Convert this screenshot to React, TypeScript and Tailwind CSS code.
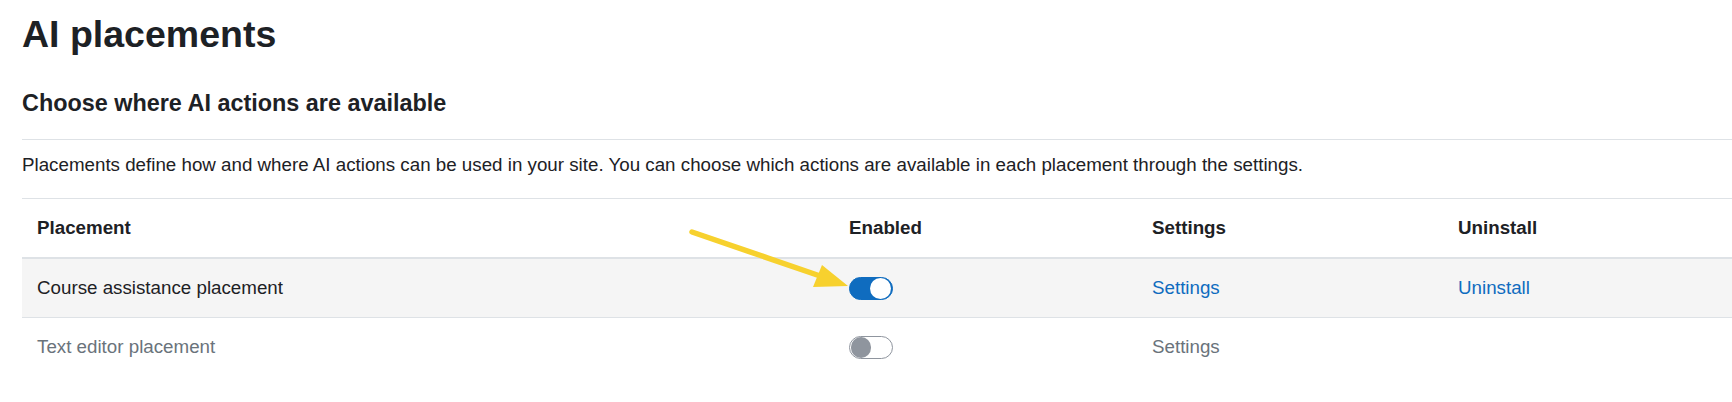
const FONT = { fontFamily: '"Liberation Sans", Arial, sans-serif' }

type Placement = {
  name: string
  enabled: boolean
}

const PLACEMENTS: Placement[] = [
  { name: 'Course assistance placement', enabled: true },
  { name: 'Text editor placement', enabled: false }
]

const COLS = 'grid grid-cols-[812px_303px_306px_1fr]'

function Toggle({ on }: { on: boolean }) {
  return (
    <span
      className={
        on
          ? 'flex h-[23px] w-[44px] items-center justify-end rounded-full border border-[#0f6cbf] bg-[#0f6cbf] px-[1.5px]'
          : 'flex h-[23px] w-[44px] items-center justify-start rounded-full border border-[#8f959e] bg-white px-[0.5px]'
      }
    >
      <span
        className={
          on ? 'h-[20.5px] w-[20.5px] rounded-full bg-white' : 'h-[20.5px] w-[20.5px] rounded-full bg-[#8f959e]'
        }
      />
    </span>
  )
}

function Row({ placement, index }: { placement: Placement; index: number }) {
  const muted = !placement.enabled
  return (
    <div
      className={`${COLS} text-[18.75px] leading-[28.125px] ${
        index === 0 ? 'bg-[#f5f5f5]' : 'border-t border-[#dee2e6]'
      }`}
    >
      <div className={`px-[15px] py-[15px] ${muted ? 'text-[#6a737b]' : ''}`}>{placement.name}</div>
      <div className="flex h-[58.125px] items-center px-[15px]">
        <Toggle on={placement.enabled} />
      </div>
      <div className="px-[15px] py-[15px]">
        <span className={muted ? 'text-[#6a737b]' : 'text-[#0f6cbf]'}>Settings</span>
      </div>
      <div className="px-[15px] py-[15px]">
        {placement.enabled && <span className="text-[#0f6cbf]">Uninstall</span>}
      </div>
    </div>
  )
}

export default function App() {
  return (
    <div className="relative h-[402px] w-full overflow-hidden bg-white pl-[22px] pt-[12px] text-[#1d2125]" style={FONT}>
      <h2 className="text-[37.5px] font-bold leading-[45px]">AI placements</h2>
      <h4 className="mt-[32px] text-[23.4px] font-bold leading-[28px]">Choose where AI actions are available</h4>
      <div className="mt-[22px] h-px bg-[#dee2e6]" />
      <p className="mt-[11px] text-[18.75px] leading-[28.125px]">
        Placements define how and where AI actions can be used in your site. You can choose which actions are
        available in each placement through the settings.
      </p>

      <div className="mt-[19px] border-t border-[#dee2e6]">
        <div className={`${COLS} border-b-2 border-[#dee2e6] text-[18.75px] font-bold leading-[28.125px]`}>
          <div className="p-[15px]">Placement</div>
          <div className="p-[15px]">Enabled</div>
          <div className="p-[15px]">Settings</div>
          <div className="p-[15px]">Uninstall</div>
        </div>
        {PLACEMENTS.map((p, i) => (
          <Row key={p.name} placement={p} index={i} />
        ))}
      </div>

      {/* annotation arrow pointing at the first toggle */}
      <svg className="pointer-events-none absolute left-0 top-0 h-[402px] w-[1732px]" viewBox="0 0 1732 402">
        <line x1="692" y1="232" x2="826" y2="278" stroke="#f7d12e" strokeWidth="5.5" strokeLinecap="round" />
        <polygon points="822,265 848,286 813,287" fill="#f7d12e" />
      </svg>
    </div>
  )
}
